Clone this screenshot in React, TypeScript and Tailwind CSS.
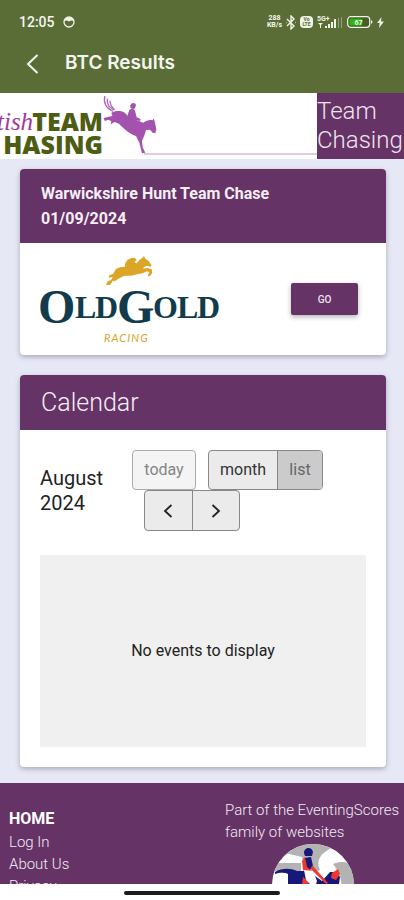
import type { ReactNode } from "react";

interface CardProps {
  header: ReactNode;
  children: ReactNode;
}

function StatusBar() {
  return (
    <div className="flex items-center justify-between h-10 pl-[19px] pr-5 pt-1">
      <div className="flex items-center gap-2">
        <span className="text-sm font-medium">12:05</span>
        <svg width="12" height="12" viewBox="0 0 12 12" fill="none">
          <circle cx="6" cy="6" r="5" stroke="#f0f3e6" strokeWidth="1.3" />
          <path d="M1 5C2 0 10 0 11 5L8 4.500l-2 1-2-1z" fill="#f0f3e6" />
        </svg>
      </div>

      <div className="flex items-center gap-1">
        <div className="flex flex-col items-center text-[7px] leading-[7px] font-bold">
          <span>288</span>
          <span>KB/s</span>
        </div>
        <svg width="10" height="15" viewBox="0 0 10 15" fill="none" stroke="#f0f3e6" strokeWidth="1.4">
          <path d="M1 4l7 7-3 3V1l3 3-7 7" />
          <path d="M9.500 7.500h.5M0 7.500h.5" />
        </svg>
        <div className="flex flex-col items-center justify-center w-[13px] h-3 rounded-sm bg-[#f0f3e6] text-[#5b6d37] text-[5px] leading-[5px] font-bold">
          <span>Vo</span>
          <span>LTE</span>
        </div>
        <svg width="26" height="13" viewBox="0 0 26 13" fill="#f0f3e6">
          <text x="0" y="5" fontSize="7" fontWeight="700" fontFamily="Roboto, sans-serif">5G+</text>
          <path d="M1 7h5l-2 2v3H3V9zM8 10h2v2H8zM11 8h2v4h-2zM14 6h2v6h-2zM17 3h2v9h-2z" />
          <path d="M21 2h1v10h-1zM24 1h1v11h-1z" opacity=".4" />
        </svg>
        <svg width="26" height="12" viewBox="0 0 26 12">
          <rect x=".7" y=".7" width="22" height="10.600" rx="3" fill="#4a5a2c" stroke="#f0f3e6" strokeWidth="1.2" />
          <rect x="2.500" y="2.500" width="13" height="7" rx="1.500" fill="#27b70e" />
          <path d="M24 4c2 1 2 3 0 4z" fill="#f0f3e6" />
          <text x="11.500" y="8.500" textAnchor="middle" fontSize="7" fontWeight="700" fontFamily="Roboto, sans-serif" fill="#fff">67</text>
        </svg>
        <svg width="7" height="11" viewBox="0 0 7 11" fill="#f0f3e6">
          <path d="M4.500 0L0 6h2.700L2 11l5-6.500H4z" />
        </svg>
      </div>
    </div>
  );
}

function AppBar() {
  return (
    <div className="flex items-center gap-6 h-[53px] pb-2 pl-[25px]">
      <button type="button" aria-label="Back">
        <svg width="16" height="22" viewBox="0 0 16 22" fill="none" stroke="#f4f6ee" strokeWidth="2">
          <path d="M12.500 3L3 12l9.500 9" />
        </svg>
      </button>
      <h1 className="font-[Inter,sans-serif] text-[19px] leading-6 font-semibold">BTC Results</h1>
    </div>
  );
}

function TeamChasingLogo() {
  return (
    <svg className="block" width="317" height="66" viewBox="0 0 317 66" role="img" aria-label="British Team Chasing">
      <text x="-3" y="37" fontSize="25" fontStyle="italic" fontFamily="Liberation Serif, serif" fill="#a3399d">
        tish
      </text>
      <g fontSize="25" fontWeight="800" fontFamily="Open Sans, sans-serif" fill="#4d5d14">
        <text x="103" y="38" textAnchor="end">TEAM</text>
        <text x="103" y="61" textAnchor="end">HASING</text>
      </g>
      <path d="M144 61h173" stroke="#d9bcc9" strokeWidth="1.300" />
      <g transform="translate(100 -1) scale(.3333)" fill="#a352ae">
        <path
          d="M15 12c-6 18 2 36 24 46M22 20c-2 14 4 27 20 34M30 26c0 12 5 20 14 27"
          fill="none"
          stroke="#b26abb"
          strokeWidth="4"
        />
        <path d="M34 62c10-6 20-6 30-4 10 2 15 9 20 16l24 10 22 8c10-7 18-9 28-7l3-6 3 9 5 24-3 12-8-2-8-9-12 1c-4 16-8 24-12 32l2 20 8 16-10 2-8-32-10-20c-18-6-36-20-50-36l-14-6-12 7 2-9-8-5-12 4-3-9 16-4 10-2z" />
        <path d="M88 54c6-6 14-4 17 2l5 20 12 5-2 6-14-2 6 16-6 8-8-6-4-16-14-10z" />
        <path d="M91 40c2-9 15-10 17-1l-3 10c-5 4-12 2-14-3z" />
      </g>
    </svg>
  );
}

function OldGoldLogo() {
  return (
    <svg width="182" height="90" viewBox="0 0 182 90" role="img" aria-label="Old Gold Racing">
      <g transform="translate(62 -162) scale(.3333)" fill="#dba526">
        <path d="M18 578l4-9 12-6 4-8-12 2 2-7 12-5 8-14c8-6 16-6 26-7l30-3c8-7 13-19 22-22l6-7 4 8c9 4 14 12 19 20l-4 5-8-4-10 3-4 6 14-2 12 4 2 10-5 8-7 4-1-5 4-8-6-3-15 6-16 3c-14 6-28 4-40 5l-16 8-8 6-9 1-8 12z" />
        <path d="M74 524l2-10 7-11 11-5 10-1 6 7-7 6 8 5-3 10-11 8z" />
      </g>
      <g fontWeight="700" fontFamily="Liberation Serif, serif" fill="#123c4b">
        <text x="0" y="69" fontSize="48">O</text>
        <text x="37" y="64" fontSize="32">L</text>
        <text x="57" y="64" fontSize="32">D</text>
        <text x="79" y="69" fontSize="48">G</text>
        <text x="115" y="64" fontSize="32">O</text>
        <text x="139" y="64" fontSize="32">L</text>
        <text x="159" y="64" fontSize="32">D</text>
      </g>
      <text x="66" y="88" fontSize="11" fontStyle="italic" fontFamily="Lato, sans-serif" fill="#d9a32a" className="tracking-widest">
        RACING
      </text>
    </svg>
  );
}

function EventingScoresLogo() {
  return (
    <svg width="84" height="84" viewBox="0 0 84 84" role="img" aria-label="EventingScores">
      <clipPath id="badge">
        <circle cx="42" cy="42" r="41" />
      </clipPath>
      <g clipPath="url(#badge)">
        <rect width="84" height="84" fill="#fff" />
        <path d="M14 10C28-2 46-2 60 5l-6 4c-7 5-8 12-5 18l-14 6-4-19z" fill="#b3b3b3" />
        <path d="M4 20h26v8H2zM62 21c10-4 18-2 24 6v20H70c2-9-2-18-8-26z" fill="#b3b3b3" />
        <path d="M4 29c7-4 15-4 22-1h11l14 10 8-9h6l4 5-2 14H17V31c-5-2-9-1-13 0z" fill="#16197a" />
        <path d="M33 10c0-6 8-7 9-1l-1 4h-7zM33 15l7-1 2 9-6 7-4-7z" fill="#16197a" />
        <path d="M31 18l3-4 2 10 5 4-4 4-5-5zM41 22l16 18-2 1-15-15zM61 30l6-4 2 5-4 6-5-2zM32 34l5 4 2 10h-9zM42 36l4 3-2 9h-5z" fill="#f2382e" />
        <path d="M33 27l9 1 4 10-3 7-8-8z" fill="#fff" />
      </g>
    </svg>
  );
}

function Card({ header, children }: CardProps) {
  return (
    <section className="rounded-sm bg-white shadow-[0_2px_5px_rgba(60,50,80,0.35)] overflow-hidden">
      <div className="bg-[#653366] text-[#f5eef5] px-[21px] py-3">{header}</div>
      {children}
    </section>
  );
}

function Calendar() {
  return (
    <div className="px-5 py-5">
      <div className="flex items-center gap-3">
        <h3 className="w-20 text-xl leading-[25px] text-[#222]">August 2024</h3>
        <div>
          <div className="flex gap-3 text-base text-[#333]">
            <button type="button" disabled className="h-10 w-16 rounded border border-[#aaa] bg-[#f4f4f4] text-[#858585]">
              today
            </button>
            <div className="flex h-10 rounded border border-[#888] bg-[#ebebeb] overflow-hidden">
              <button type="button" className="w-[69px] border-r border-[#888]">
                month
              </button>
              <button type="button" className="w-11 bg-[#cbcbcb] text-[#666]">
                list
              </button>
            </div>
          </div>
          <div className="flex w-24 h-[41px] ml-3 rounded border border-[#888] bg-[#ebebeb]">
            <button type="button" aria-label="Previous month" className="flex flex-1 items-center justify-center border-r border-[#888]">
              <svg width="10" height="16" viewBox="0 0 10 16" fill="none" stroke="#222" strokeWidth="1.800">
                <path d="M8.500 2l-6.500 6 6.500 6" />
              </svg>
            </button>
            <button type="button" aria-label="Next month" className="flex flex-1 items-center justify-center">
              <svg width="10" height="16" viewBox="0 0 10 16" fill="none" stroke="#222" strokeWidth="1.800">
                <path d="M1.500 2l6.500 6-6.500 6" />
              </svg>
            </button>
          </div>
        </div>
      </div>

      <div className="flex items-center justify-center h-48 mt-6 bg-[#f0f0f0] text-base text-[#222]">
        No events to display
      </div>
    </div>
  );
}

function Footer() {
  return (
    <footer className="flex justify-between bg-[#653366] text-[#f3eaf3] pl-[9px] pr-1 text-[15px] font-light leading-[22px]">
      <nav className="flex flex-col pt-6">
        <strong className="text-base leading-6 font-bold text-white">HOME</strong>
        <a href="#login">Log In</a>
        <a href="#about">About Us</a>
        <a href="#privacy">Privacy</a>
      </nav>
      <div className="w-[175px] pt-4">
        <p>Part of the EventingScores family of websites</p>
        <a href="#eventingscores" className="block w-fit mx-auto">
          <EventingScoresLogo />
        </a>
      </div>
    </footer>
  );
}

export default function App() {
  return (
    <div className="flex flex-col h-screen bg-[#e6e8f5] font-[Roboto,sans-serif]">
      <header className="shrink-0 bg-[#5b6d37] text-[#f4f6ee]">
        <StatusBar />
        <AppBar />
      </header>

      <main className="flex-1 min-h-0 overflow-y-auto [scrollbar-width:none]">
        <div className="flex h-[66px] bg-white">
          <div className="flex-1 min-w-0 overflow-hidden">
            <TeamChasingLogo />
          </div>
          <h2 className="w-[87px] bg-[#653366] text-[#f0e4f0] text-2xl leading-[29px] font-light pt-1">
            Team Chasing
          </h2>
        </div>

        <div className="flex flex-col gap-5 pl-5 pr-[18px] pt-[10px] pb-4">
          <Card
            header={
              <h2 className="text-base leading-[25px] font-bold">
                Warwickshire Hunt Team Chase
                <br />
                01/09/2024
              </h2>
            }
          >
            <div className="flex items-center justify-between h-28 pl-[18px] pr-7">
              <OldGoldLogo />
              <button
                type="button"
                className="w-[67px] h-8 rounded-xs bg-[#653366] text-[#f0e4f0] text-[10px] font-medium shadow-[0_2px_5px_rgba(0,0,0,0.3)]"
              >
                GO
              </button>
            </div>
          </Card>

          <Card header={<h2 className="text-[25px] leading-[31px] font-light">Calendar</h2>}>
            <Calendar />
          </Card>
        </div>

        <Footer />
      </main>

      <div className="flex shrink-0 justify-center h-4 pt-[7px] bg-white">
        <div className="w-[156px] h-1 rounded-full bg-[#1c1c1c]" />
      </div>
    </div>
  );
}
